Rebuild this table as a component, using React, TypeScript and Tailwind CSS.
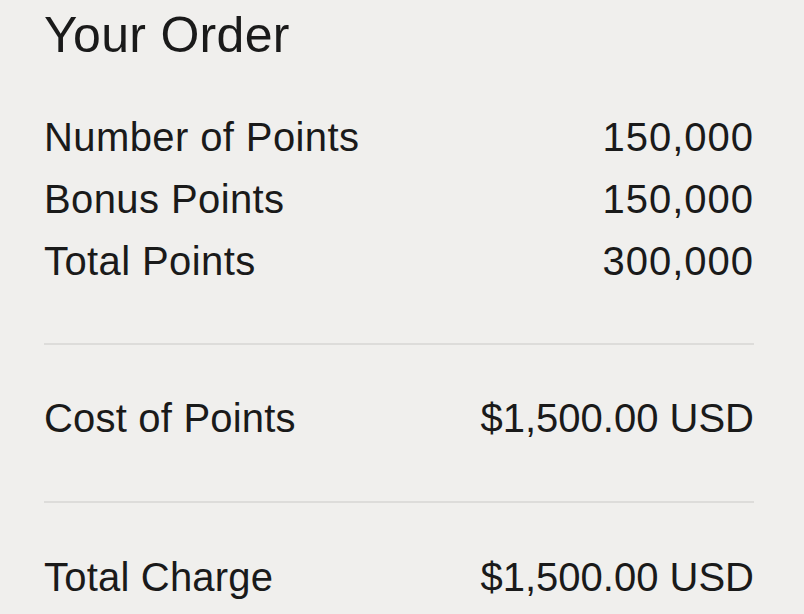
export default function App() {
  const points = [
    { label: "Number of Points", value: "150,000" },
    { label: "Bonus Points", value: "150,000" },
    { label: "Total Points", value: "300,000" },
  ];

  return (
    <div
      className="min-h-[614px] w-[804px] bg-[#f0efed] pl-[44px] pr-[50px] pt-[7px] text-[#1a1a1a]"
      style={{ fontFamily: '"Liberation Sans", Arial, sans-serif' }}
    >
      <h2 className="text-[50px] leading-[56px] tracking-[0.3px]">Your Order</h2>

      <div className="mt-[43px]">
        {points.map((row) => (
          <div
            key={row.label}
            className="flex justify-between text-[40px] leading-[62px]"
          >
            <span className="tracking-[0.4px]">{row.label}</span>
            <span className="tracking-[1px]">{row.value}</span>
          </div>
        ))}
      </div>

      <div className="mt-[51px] h-[2px] bg-[#dddcda]" />

      <div className="mt-[42px] flex justify-between text-[40px] leading-[62px]">
        <span className="tracking-[0.2px]">Cost of Points</span>
        <span>$1,500.00 USD</span>
      </div>

      <div className="mt-[52px] h-[2px] bg-[#dddcda]" />

      <div className="mt-[43px] flex justify-between text-[40px] leading-[62px]">
        <span className="tracking-[0.2px]">Total Charge</span>
        <span>$1,500.00 USD</span>
      </div>
    </div>
  );
}
